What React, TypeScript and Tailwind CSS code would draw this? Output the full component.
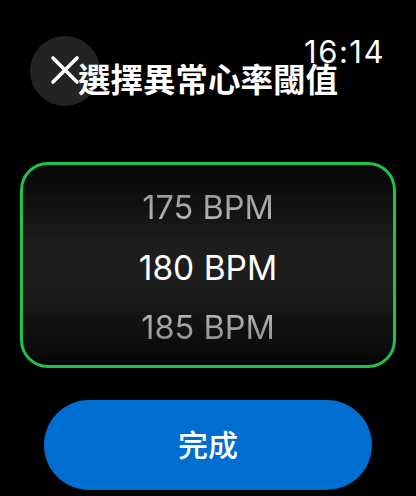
import React from "react";

const font = { fontFamily: '"Inter", "Noto Sans CJK TC", sans-serif' };

export default function App() {
  return (
    <div
      className="w-[416px] h-[496px] bg-black overflow-hidden flex flex-col text-white"
      style={font}
    >
      <div className="flex items-start">
        <button className="ml-[30px] mt-[36px] w-[70px] h-[70px] shrink-0 rounded-full bg-[#232323] flex items-center justify-center">
          <svg width="30" height="30" viewBox="0 0 30 30" className="-mt-[2px]">
            <path
              d="M3 3 L27 27 M27 3 L3 27"
              stroke="white"
              strokeWidth="3.6"
              strokeLinecap="round"
            />
          </svg>
        </button>
        <div className="-ml-[22px] flex-1 mr-[32px] flex flex-col">
          <div className="self-end text-[31px] leading-[26px] mt-[39px] font-normal tracking-[1.5px] -mr-[1px]">
            16:14
          </div>
          <div className="text-[32.5px] leading-[32px] font-bold whitespace-nowrap">
            選擇異常心率閾值
          </div>
        </div>
      </div>

      <div className="mt-[56px] mx-[20px] h-[206px] pt-[6px] rounded-[28px] border-[3px] border-[#1fc14f] bg-[linear-gradient(to_bottom,#060606_0%,#1d1d1d_40%,#1d1d1d_60%,#060606_100%)] flex flex-col items-center justify-center">
        <div className="text-[32.5px] leading-[60px] text-transparent bg-clip-text bg-[linear-gradient(to_bottom,#8a8a8a,#c8c8c8)]">
          175 BPM
        </div>
        <div className="text-[33.5px] leading-[60px] text-white">180 BPM</div>
        <div className="text-[32.5px] leading-[60px] text-transparent bg-clip-text bg-[linear-gradient(to_bottom,#c8c8c8,#7a7a7a)]">
          185 BPM
        </div>
      </div>

      <button className="mt-[32px] mx-[44px] h-[90px] rounded-full bg-[#006dd0] flex items-center justify-center">
        <span className="text-[30px] font-medium text-white">完成</span>
      </button>
    </div>
  );
}
